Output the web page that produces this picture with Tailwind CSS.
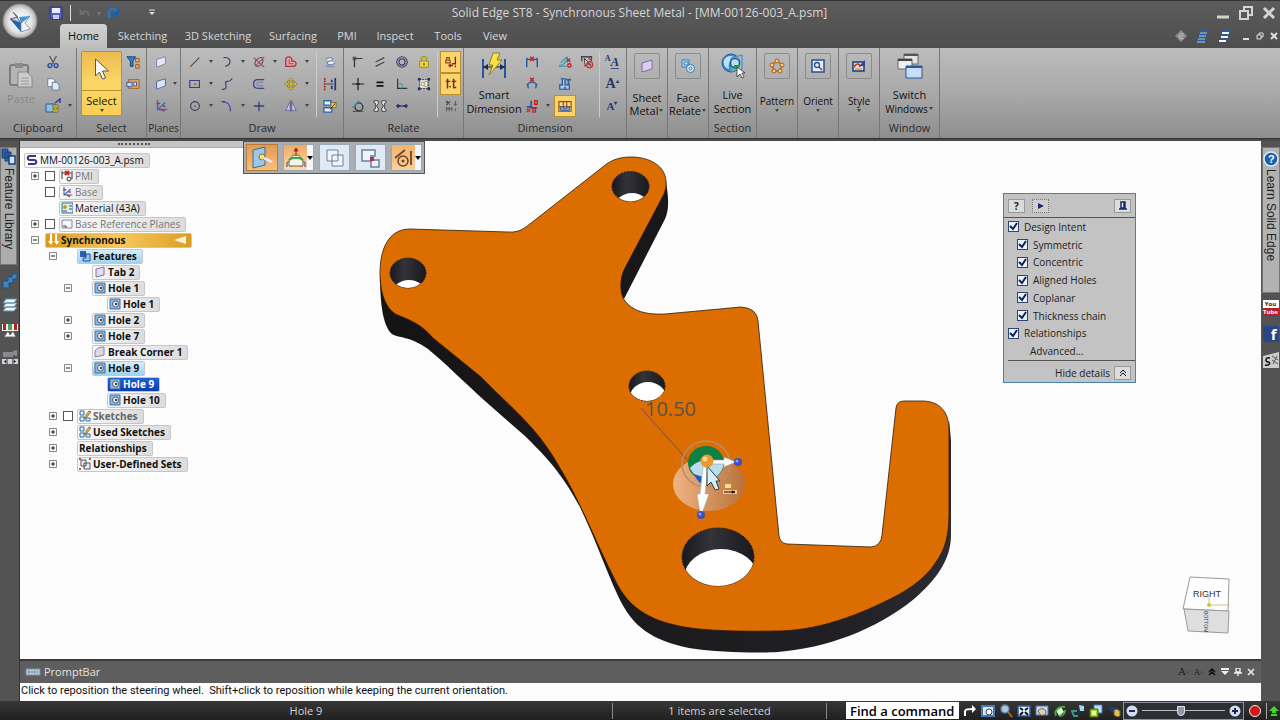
<!DOCTYPE html>
<html lang="en">
<head>
<meta charset="utf-8">
<meta name="viewport" content="width=device-width, initial-scale=1">
<title>Solid Edge ST8 - Synchronous Sheet Metal</title>
<script src="https://cdn.jsdelivr.net/npm/@tailwindcss/browser@4"></script>
</head>
<body class="h-screen flex flex-col overflow-hidden bg-[#505050] text-[11px] leading-4 text-[#222] font-['Open_Sans','Noto_Sans',sans-serif]">

<!-- icon sprite -->
<svg class="absolute size-0">
  <defs>
    <radialGradient id="gOrb"><stop offset="0" stop-color="#fff"/><stop offset=".7" stop-color="#e4e4e4"/><stop offset="1" stop-color="#aaa"/></radialGradient>
  </defs>
  <symbol id="arrow" viewBox="0 0 6 4"><path d="M1 0h4L3 3z" fill="#444"/></symbol>
  <symbol id="save" viewBox="0 0 16 16"><path d="M2 2h12v12H3l-1-1z" fill="#5560b8" stroke="#2c3480"/><path d="M4 3h8v5H4z" fill="#e8ecff"/><path d="M5 10h6v4H5z" fill="#c4c9ee"/></symbol>
  <symbol id="undo" viewBox="0 0 16 16"><path d="M13 12c1-6-5-8-8-4M4 4v5h5" fill="none" stroke="#6f6f6f" stroke-width="2"/></symbol>
  <symbol id="redo" viewBox="0 0 16 16"><path d="M3 13C0 5 6 1 11 6" fill="none" stroke="#2478c0" stroke-width="3"/><path d="M14 2v9H6z" fill="#1d62a8"/><path d="M5 9l4 4" stroke="#1d62a8" stroke-width="3"/></symbol>
  <symbol id="paste" viewBox="0 0 26 28"><rect x="2" y="4" width="18" height="20" rx="2" fill="#b4b4b4" stroke="#7c7c7c" stroke-width="2"/><path d="M7 2h8v5H7z" fill="#8c8c8c"/><path d="M10 11h9l5 5v10H10z" fill="#cbcbcb" stroke="#888"/><path d="M13 17h8M13 20h8M13 23h8" stroke="#999"/></symbol>
  <symbol id="cut" viewBox="0 0 16 16"><path d="M4 1l5 9M12 1L7 10" stroke="#55606e" stroke-width="1.5"/><circle cx="4.500" cy="12" r="2.200" fill="none" stroke="#2a49a8" stroke-width="1.600"/><circle cx="11.500" cy="12" r="2.200" fill="none" stroke="#2a49a8" stroke-width="1.600"/></symbol>
  <symbol id="copy" viewBox="0 0 16 16"><path d="M2 2h6l2 2v7H2z" fill="#f4f7fb" stroke="#68788c"/><path d="M7 6h5l3 3v6H7z" fill="#dfe9f4" stroke="#5d7088"/></symbol>
  <symbol id="format" viewBox="0 0 16 16"><path d="M1 6h9v8H1z" fill="#8ec0e8" stroke="#2b5794"/><path d="M10 5l5-4v4" fill="none" stroke="#2b3f8c" stroke-width="1.500"/><path d="M8 7h5v7H8z" fill="#e6d54c" stroke="#74741e"/><circle cx="10.500" cy="10.500" r="1.500" fill="none" stroke="#56611a"/></symbol>
  <symbol id="cursor" viewBox="0 0 16 24"><path d="M2 1v17l4-4 3 7 3-1-3-7h6z" fill="#fdfdfd" stroke="#555"/></symbol>
  <symbol id="filter" viewBox="0 0 16 16"><path d="M1 2h10L8 7v6H5V7z" fill="#2f7fc8" stroke="#153f72"/><path d="M11 4h4v4h-4z" fill="#e8b45a" stroke="#9b4d16"/><path d="M11 11h4v4h-4z" fill="#e8b45a" stroke="#9b4d16"/></symbol>
  <symbol id="selbox" viewBox="0 0 16 16"><path d="M3 3h12v10H3z" fill="#e6a661" stroke="#a65a1a"/><path d="M1 6h6v5H1z" fill="#c3daf5" stroke="#294f94"/><path d="M9 6h3v4H9z" fill="#fff" stroke="#294f94"/></symbol>
  <symbol id="plane" viewBox="0 0 16 16"><path d="M3 5l10-3v8L3 14z" fill="#e3e8f4" stroke="#7a82a0"/></symbol>
  <symbol id="plane2" viewBox="0 0 16 16"><path d="M3 5l10-3v8L3 14z" fill="#d7e6f8" stroke="#4a5c86"/><path d="M2 15l11-4" stroke="#83a9de"/></symbol>
  <symbol id="axes" viewBox="0 0 16 16"><path d="M4 1v11h11M4 12l9-8" fill="none" stroke="#4267b0" stroke-width="1.500"/><path d="M3 5h4M8 12l4 2M10 8h3" stroke="#a33c5c" stroke-width="2"/></symbol>
  <symbol id="line" viewBox="0 0 16 16"><path d="M3 13L13 3" stroke="#4b4b4b" stroke-width="1.300"/><circle cx="3" cy="13" r="1" fill="#b36b29"/></symbol>
  <symbol id="rect" viewBox="0 0 16 16"><path d="M2 4h11v8H2z" fill="none" stroke="#38407c" stroke-width="1.300"/><path d="M7 7h2v2H7z" fill="#a65a1a"/></symbol>
  <symbol id="circle" viewBox="0 0 16 16"><circle cx="8" cy="8" r="5" fill="none" stroke="#38406c" stroke-width="1.300"/><path d="M7 7h2v2H7z" fill="#a65a1a"/></symbol>
  <symbol id="arc" viewBox="0 0 16 16"><path d="M4 3c9-1 10 8 2 10" fill="none" stroke="#3a4070" stroke-width="1.300"/></symbol>
  <symbol id="curve" viewBox="0 0 16 16"><path d="M2 14c10 1 1-9 6-9s3-1 6-3" fill="none" stroke="#3a4070" stroke-width="1.300"/></symbol>
  <symbol id="fillet" viewBox="0 0 16 16"><path d="M2 3c7 0 10 3 10 11" fill="none" stroke="#4848b8" stroke-width="1.600"/><path d="M2 3h4" stroke="#444"/></symbol>
  <symbol id="trim" viewBox="0 0 16 16"><path d="M5 13C0 8 8 2 11 3s2 10-6 10" fill="none" stroke="#51567c" stroke-width="1.300"/><path d="M2 3l12 11M14 2L4 13" stroke="#b54452" stroke-width="1.200"/></symbol>
  <symbol id="offset" viewBox="0 0 16 16"><path d="M14 3H7C0 3 0 13 7 13h7" fill="none" stroke="#3e4684" stroke-width="1.500"/><path d="M13 6H8c-3 0-3 4 0 4h5" fill="none" stroke="#858bb4" stroke-width="1.500"/></symbol>
  <symbol id="extend" viewBox="0 0 16 16"><path d="M8 3v11M2 8h12" stroke="#38407c" stroke-width="1.500"/></symbol>
  <symbol id="region" viewBox="0 0 16 16"><path d="M2 13V5c0-4 8-4 7 2 6-1 6 6 2 6z" fill="#dca8a8" stroke="#b6303c" stroke-width="1.500"/><path d="M6 5v5h5" stroke="#b6303c" fill="none"/></symbol>
  <symbol id="move" viewBox="0 0 16 16"><path d="M8 1l3 3H9v3h3V5l3 3-3 3V9H9v3h2l-3 3-3-3h2V9H4v2L1 8l3-3v2h3V4H5z" fill="#ecc728" stroke="#75631a" stroke-width=".7"/></symbol>
  <symbol id="mirror" viewBox="0 0 16 16"><path d="M7 3v10H2zM9 3v10h5z" fill="#c2cdea" stroke="#5964a0"/><path d="M8 1v14" stroke="#954454"/></symbol>
  <symbol id="smooth" viewBox="0 0 16 16"><path d="M3 5c3-3 8-2 8 0s-6 1-6 4 5 3 9 0" fill="#e9edf8" stroke="#707caa" stroke-width="1.200"/><path d="M3 13h10" stroke="#8b94bd" stroke-width="2"/></symbol>
  <symbol id="dims" viewBox="0 0 16 16"><path d="M2 1v14" stroke="#b22" stroke-width="2" stroke-dasharray="2 1"/><path d="M14 1v14M10 3v3M10 10v4" stroke="#243a78" stroke-width="2"/><path d="M4 8h8" stroke="#333"/></symbol>
  <symbol id="construct" viewBox="0 0 16 16"><path d="M1 2h8v5H1zM1 10h9v5H1z" fill="#e9f1fb" stroke="#2a66b0" stroke-width="1.500"/><path d="M9 4h6v6H9z" fill="#f0c84d" stroke="#7d652a"/><path d="M8 12l6-7" stroke="#333"/></symbol>
  <symbol id="connect" viewBox="0 0 16 16"><path d="M4 14V4h9" fill="none" stroke="#333" stroke-width="1.400"/><path d="M2 2h4v4H2z" fill="#456"/></symbol>
  <symbol id="parallel" viewBox="0 0 16 16"><path d="M3 8l10-5M3 13l10-5" stroke="#444" stroke-width="1.300"/></symbol>
  <symbol id="concentric" viewBox="0 0 16 16"><circle cx="8" cy="8" r="6" fill="none" stroke="#39406c" stroke-width="1.300"/><circle cx="8" cy="8" r="3.500" fill="none" stroke="#39406c" stroke-width="1.300"/></symbol>
  <symbol id="lock" viewBox="0 0 16 16"><path d="M5 7V4c0-3 6-3 6 0v3" fill="none" stroke="#b39b1a" stroke-width="1.600"/><path d="M3 7h10v7H3z" fill="#f0d83a" stroke="#96801a"/><path d="M8 9v3" stroke="#5f5010" stroke-width="1.500"/></symbol>
  <symbol id="horiz" viewBox="0 0 16 16"><path d="M8 1v14M1 8h14" stroke="#222" stroke-width="1.400"/><path d="M6 7h4v2H6z" fill="#222"/></symbol>
  <symbol id="equal" viewBox="0 0 16 16"><path d="M4 6h8M4 10h8" stroke="#111" stroke-width="2"/></symbol>
  <symbol id="perp" viewBox="0 0 16 16"><path d="M3 2v11h11" fill="none" stroke="#333" stroke-width="1.400"/><path d="M3 8h5v5" fill="#8cc4d8" stroke="#38859e"/></symbol>
  <symbol id="rigid" viewBox="0 0 16 16"><path d="M3 3h10v10H3z" fill="#e9eef8" stroke="#222" stroke-dasharray="2 1"/><path d="M5 6h3v4H5zM9 5h3v6H9z" fill="#fff" stroke="#b58e3a"/><path d="M1 1h3v3H1zM12 1h3v3h-3zM1 12h3v3H1zM12 12h3v3h-3z" fill="#1f2f5e"/></symbol>
  <symbol id="tangent" viewBox="0 0 16 16"><circle cx="9" cy="9" r="4.500" fill="none" stroke="#333" stroke-width="1.500"/><path d="M2 10l7-8" stroke="#2692ae" stroke-width="1.500"/><path d="M2 14h12" stroke="#333"/></symbol>
  <symbol id="symm" viewBox="0 0 16 16"><path d="M1 2h5v3L4 8l2 3v3H1v-2l2-1V5L1 4zM15 2h-5v3l2 3-2 3v3h5v-2l-2-1V5l2-1z" fill="#eee" stroke="#333"/></symbol>
  <symbol id="collinear" viewBox="0 0 16 16"><path d="M1 8h14" stroke="#27306c" stroke-width="1.400"/><path d="M3 6l3 2-3 2zM13 6l-3 2 3 2z" fill="#27306c" stroke="#27306c"/></symbol>
  <symbol id="maintain" viewBox="0 0 16 16"><path d="M3 6V3h3v3M2 6h5v3H2z" fill="none" stroke="#8b4a20" stroke-width="1.300"/><path d="M13 2v8H9M5 12h5M7 10v4M13 12v2" stroke="#7c2323" stroke-width="1.500" fill="none"/></symbol>
  <symbol id="handles" viewBox="0 0 16 16"><path d="M4 2v11M2 5h5M11 2v11M9 5h5M6 11h2M12 12h2" stroke="#7c2323" stroke-width="1.700"/></symbol>
  <symbol id="inter" viewBox="0 0 16 16"><path d="M2 4h5M4 2v5M2 2l5 5M7 2L2 7M13 2v6M11 6h4M3 9v5M6 9v5M9 9v5M3 11h6M13 11v3" stroke="#555" stroke-width="1.100"/></symbol>
  <symbol id="smart" viewBox="0 0 28 28"><path d="M3 7v19M25 7v19" stroke="#2b529e" stroke-width="2"/><path d="M3 15h22" stroke="#222"/><path d="M3 15l5-3v6zM25 15l-5-3v6z" fill="#1b2c5e"/><path d="M13 1h7l-3 7h5L9 23l4-10H9z" fill="#fbe243" stroke="#93821e"/></symbol>
  <symbol id="dist" viewBox="0 0 16 16"><path d="M2 3v11M14 3v11M2 5h12" stroke="#2b529e" stroke-width="1.600"/><path d="M6 2l4 5M10 2L6 7" stroke="#c22" stroke-width="1.800"/></symbol>
  <symbol id="angle" viewBox="0 0 16 16"><path d="M4 13c-3-7 3-7 4-7s7 0 4 7M2 8l2 3M14 8l-2 3" fill="none" stroke="#2b629e" stroke-width="1.600"/><path d="M6 1l4 4M10 1L6 5" stroke="#c22" stroke-width="1.800"/></symbol>
  <symbol id="coord" viewBox="0 0 16 16"><path d="M7 2v8h7M2 9h6" fill="none" stroke="#2b529e" stroke-width="1.800"/><path d="M2 11l4 4M6 11l-4 4" stroke="#c22" stroke-width="1.500"/><path d="M11 2h3v4h-3zM9 11h3v4H9z" fill="none" stroke="#c22" stroke-width="1.500"/></symbol>
  <symbol id="symdia" viewBox="0 0 16 16"><path d="M1 12c4 0 9-3 10-10M1 13h9M3 9l7-7" fill="none" stroke="#4f9bb0" stroke-width="1.500"/><circle cx="13" cy="12" r="2" fill="none" stroke="#c22" stroke-width="1.500"/><path d="M10 4l4 4M14 4l-4 4" stroke="#c22" stroke-width="1.500"/></symbol>
  <symbol id="attach" viewBox="0 0 16 16"><path d="M3 2h5v7h5v5H2V9h3V2" fill="#9fc9ee" stroke="#2b529e" stroke-width="1.300"/><path d="M9 3h6M12 3v6M8 11v3" stroke="#2b629e" stroke-width="1.800"/></symbol>
  <symbol id="lockdim" viewBox="0 0 16 16"><path d="M1 14V3h14v11zM6 3v6h4V3M1 9h14" fill="#f8dfa0" stroke="#8e4b18" stroke-width="1.300"/><path d="M3 9v4h10V9h-3v2H6V9z" fill="#7fb3dc" stroke="#2b529e"/></symbol>
  <symbol id="auto" viewBox="0 0 16 16"><path d="M1 2h13M2 1v6M13 1v6" stroke="#445" stroke-width="1.500"/><path d="M5 4l1 9 2-3 4 1z" fill="#eee" stroke="#222"/><circle cx="11" cy="11" r="3.500" fill="none" stroke="#c33" stroke-width="1.300"/><path d="M9 2l3 4M9 9l4 4" stroke="#c33" stroke-width="1.400"/></symbol>
  <symbol id="globe" viewBox="0 0 24 26"><circle cx="10" cy="10" r="9" fill="#3b8ac6" stroke="#1d5c98"/><path d="M3 7c3-5 9-5 12-1-6-1-8 4-7 10C4 15 2 11 3 7z" fill="#b8e2f4"/><path d="M10 5l11-3v14l-11 3z" fill="#85c0e8" fill-opacity=".6" stroke="#4a87b8"/><circle cx="14" cy="10" r="4.500" fill="#c0dcf0" stroke="#1d5c98" stroke-width="1.500"/><path d="M13 12h5v4h-5z" fill="#2f9440"/><path d="M16 14v10l3-3 2 4 2-1-2-4h3z" fill="#fff" stroke="#333" stroke-width=".8"/></symbol>
  <symbol id="sheet" viewBox="0 0 16 16"><path d="M3 5l10-3v9L3 14z" fill="#d9cdf0" stroke="#7a6ca0"/></symbol>
  <symbol id="facerel" viewBox="0 0 16 16"><path d="M2 2h7v7H2z" fill="#cfe6f6" stroke="#2c7aaa"/><path d="M4 4h4v3H4z" fill="none" stroke="#2c7aaa"/><circle cx="10.500" cy="10.500" r="4" fill="#d8edfa" stroke="#2c7aaa"/><circle cx="10.500" cy="10.500" r="1.500" fill="none" stroke="#2c7aaa"/></symbol>
  <symbol id="pattern" viewBox="0 0 16 16"><path d="M8 3l5 4-2 6H5L3 7z" fill="none" stroke="#b46c1c" stroke-width="1.500"/><g fill="#f4cf8c" stroke="#a85c14"><circle cx="8" cy="3" r="2"/><circle cx="13" cy="7" r="2"/><circle cx="11" cy="13" r="2"/><circle cx="5" cy="13" r="2"/><circle cx="3" cy="7" r="2"/></g></symbol>
  <symbol id="orient" viewBox="0 0 16 16"><path d="M2 2h12v12H2z" fill="#e2eef9" stroke="#28508c" stroke-width="1.500"/><circle cx="7" cy="7" r="2.500" fill="none" stroke="#28508c" stroke-width="1.300"/><path d="M9 9l3 3" stroke="#a03a20" stroke-width="1.600"/></symbol>
  <symbol id="style" viewBox="0 0 16 16"><path d="M2 4h11v9H2z" fill="#cbdaf4" stroke="#28386c" stroke-width="1.500"/><path d="M3 9c3-5 6-3 6 0" fill="none" stroke="#c23a20" stroke-width="1.600"/><path d="M8 8l6-6v6z" fill="#2848a8"/><path d="M4 11h7" stroke="#d8a428" stroke-width="1.500"/></symbol>
  <symbol id="switch" viewBox="0 0 26 26"><path d="M7 1h14v10H7z" fill="#e4e4e4" stroke="#666"/><path d="M7 2h14" stroke="#555" stroke-width="2"/><path d="M1 6h14v10H1z" fill="#eee" stroke="#666"/><path d="M1 7h14" stroke="#444" stroke-width="2"/><path d="M9 13h16v12H9z" fill="#c7def6" stroke="#28569c"/><path d="M9 14h16" stroke="#2858a8" stroke-width="2"/></symbol>
  <symbol id="hole" viewBox="0 0 12 12"><path d="M1 1h10v10H1z" fill="#8bb7e2" stroke="#3d6ea8"/><circle cx="6.500" cy="6" r="3" fill="#e8e4d8" stroke="#3a4a6a" stroke-width=".8"/><path d="M6 5h2v2H6z" fill="#444"/></symbol>
  <symbol id="tab" viewBox="0 0 12 12"><path d="M2 3l8-2v8l-8 2z" fill="#e4dcf2" stroke="#7b7396"/></symbol>
  <symbol id="corner" viewBox="0 0 12 12"><path d="M1 11V6c0-3 4-5 9-5v8z" fill="#ddd8ee" stroke="#8480a0"/></symbol>
  <symbol id="features" viewBox="0 0 12 12"><path d="M1 1h6v6H1z" fill="#2d5fae"/><path d="M5 4h6v7H4V8h3V4" fill="#9cc7ee" stroke="#1d4a94"/></symbol>
  <symbol id="sketch" viewBox="0 0 12 12"><path d="M1 1h4v4H1zM1 7h4v4H1zM7 8h4v3H7z" fill="#e4f0fa" stroke="#2c6ca8"/><path d="M5 8l5-7 2 1-5 6z" fill="#e8b93c" stroke="#6b4c14" stroke-width=".7"/></symbol>
  <symbol id="sets" viewBox="0 0 12 12"><path d="M2 2h5v6H2zM5 5h6v6H5z" fill="#eef" stroke="#555"/><path d="M0 0h2v2H0zM10 0h2v2h-2zM0 10h2v2H0z" fill="#b4602c"/></symbol>
  <symbol id="plus" viewBox="0 0 8 8"><path d="M.5.5h7v7h-7z" fill="#fafafa" stroke="#8a8a8a"/><path d="M2 4h4M4 2v4" stroke="#222"/></symbol>
  <symbol id="minus" viewBox="0 0 8 8"><path d="M.5.5h7v7h-7z" fill="#fafafa" stroke="#8a8a8a"/><path d="M2 4h4" stroke="#222"/></symbol>
  <symbol id="check" viewBox="0 0 11 11"><path d="M2 5l3 3 4-6" fill="none" stroke="#102050" stroke-width="2"/></symbol>
</svg>

<!-- title bar and tabs -->
<header class="relative h-12 shrink-0 bg-linear-to-b from-[#5c5c5e] to-[#4e4e4e] border-t border-[#333] text-[#d6d6d6]">
  <button aria-label="Application menu" class="absolute left-[2px] top-[2px] z-10">
    <svg class="size-9" viewBox="0 0 36 36"><circle cx="18" cy="18" r="17" fill="url(#gOrb)" stroke="#888"/><path d="M8 16l11 4v9z" fill="#1b62b4"/><path d="M19 20l9-7-5 7 5 6-9 3z" fill="#eef3f8" stroke="#7a8592" stroke-width=".8"/><path d="M11 9l8 11-11-4 8-2z" fill="#c6d4e0" stroke="#667"/><path d="M17 14l11-1-9 7z" fill="#3b97de"/></svg>
  </button>
  <div class="h-[23px] flex items-center">
    <div class="w-[160px] pl-12 flex items-center gap-[6px] shrink-0">
      <button aria-label="Save"><svg class="size-4"><use href="#save"/></svg></button>
      <span class="w-px h-4 bg-[#ddd]"></span>
      <button aria-label="Undo"><svg class="size-[14px]"><use href="#undo"/></svg></button>
      <span class="text-[#777] text-[8px]">▾</span>
      <button aria-label="Redo"><svg class="size-[14px]"><use href="#redo"/></svg></button>
      <button aria-label="Customize" class="ml-auto pr-1"><svg class="w-2 h-[7px]" viewBox="0 0 8 7"><path d="M1 1h6" stroke="#ddd"/><path d="M1 3h6L4 6z" fill="#ddd"/></svg></button>
    </div>
    <h1 class="flex-1 text-center text-[12px] whitespace-nowrap">Solid Edge ST8 - Synchronous Sheet Metal - [MM-00126-003_A.psm]</h1>
    <div class="w-[161px] flex justify-end items-center gap-2 pr-1 shrink-0">
      <button aria-label="Minimize"><svg class="size-[14px]" viewBox="0 0 14 14"><path d="M1 11h12" stroke="#d4d4d4" stroke-width="3"/></svg></button>
      <button aria-label="Restore"><svg class="size-4" viewBox="0 0 16 16"><path d="M2 6h8v8H2zM6 6V2h8v8h-4" fill="none" stroke="#d4d4d4" stroke-width="2"/></svg></button>
      <button aria-label="Close"><svg class="size-[14px]" viewBox="0 0 14 14"><path d="M2 2l10 10M12 2L2 12" stroke="#d4d4d4" stroke-width="3"/></svg></button>
    </div>
  </div>
  <nav class="h-6 flex items-end pl-[60px]">
    <a href="#" class="w-[47px] h-6 pt-1 text-center rounded-t-sm bg-linear-to-b from-[#d2d2d2] to-[#bdbdbd] text-[#111]">Home</a>
    <a href="#" class="w-[71px] h-6 pt-1 text-center">Sketching</a>
    <a href="#" class="w-[80px] h-6 pt-1 text-center">3D Sketching</a>
    <a href="#" class="w-[70px] h-6 pt-1 text-center">Surfacing</a>
    <a href="#" class="w-[38px] h-6 pt-1 text-center">PMI</a>
    <a href="#" class="w-[58px] h-6 pt-1 text-center">Inspect</a>
    <a href="#" class="w-[48px] h-6 pt-1 text-center">Tools</a>
    <a href="#" class="w-[46px] h-6 pt-1 text-center">View</a>
    <div class="ml-auto h-6 flex items-center gap-[6px] pr-[2px]">
      <button aria-label="Help"><svg class="size-[14px]" viewBox="0 0 14 14"><path d="M7 1l6 6-6 6-6-6z" fill="#8a8a8a"/><path d="M5 8c0-4 5-4 4-2s-4 1-3 3 3 0 4 0" fill="none" stroke="#ccc"/></svg></button>
      <button aria-label="Cascade" class="ml-[2px]"><svg class="size-[14px]" viewBox="0 0 14 14"><path d="M5 2h7M4 5h7M3 8h7M2 11h7" stroke="#245ca8" stroke-width="2"/><path d="M4 4h7M3 7h7M2 10h7M1 13h8" stroke="#a8cdf2"/></svg></button>
      <button aria-label="Tile" class="ml-[2px]"><svg class="size-[14px]" viewBox="0 0 14 14"><path d="M5 2h7M4 5h7" stroke="#245ca8" stroke-width="2"/><path d="M4 4h7M3 8h7M1 12h7" stroke="#f4f8ff" stroke-width="2"/><path d="M3 10h7" stroke="#245ca8"/></svg></button>
      <button aria-label="Minimize document" class="ml-[5px]"><svg class="w-[7px] h-2" viewBox="0 0 7 8"><path d="M0 7h6" stroke="#ddd" stroke-width="2"/></svg></button>
      <button aria-label="Restore document"><svg class="size-2" viewBox="0 0 8 8"><path d="M1 3h4v4H1zM3 3V1h4v4H5" fill="none" stroke="#ddd"/></svg></button>
      <button aria-label="Close document"><svg class="size-2" viewBox="0 0 8 8"><path d="M1 1l6 6M7 1L1 7" stroke="#ddd" stroke-width="2"/></svg></button>
    </div>
  </nav>
</header>

<!-- ribbon -->
<div class="h-[90px] shrink-0 flex bg-linear-to-b from-[#bcbcbc] via-[#a9a9a9] to-[#8e8e8e] [&>section]:shrink-0 [&>section]:flex [&>section]:flex-col [&>section]:justify-between [&>section]:pt-[3px] [&>section]:pb-[2px] [&>section]:border-r [&>section]:border-[#777] [&_h2]:text-center [&_h2]:text-[#2b2b2b] [&_button]:flex [&_button]:items-center [&_button]:justify-center">
  <section class="w-[77px]">
    <div class="flex">
      <button class="w-[42px] flex-col text-[#888]"><svg class="w-[26px] h-7"><use href="#paste"/></svg><span class="mt-[2px]">Paste</span></button>
      <div class="grid grid-cols-[22px_12px] auto-rows-[22px]">
        <button aria-label="Cut"><svg class="size-[14px]"><use href="#cut"/></svg></button><span></span>
        <button aria-label="Copy"><svg class="size-[14px]"><use href="#copy"/></svg></button><span></span>
        <button aria-label="Format painter"><svg class="size-4"><use href="#format"/></svg></button><button aria-label="More"><svg class="w-[6px] h-1"><use href="#arrow"/></svg></button>
      </div>
    </div>
    <h2>Clipboard</h2>
  </section>
  <section class="w-[70px]">
    <div class="flex pl-1">
      <button class="w-[41px] h-[65px] flex-col bg-linear-to-b from-[#ecbb4c] via-[#fbd768] to-[#fbcf52] border border-[#b98f35] rounded-xs text-[#111]">
        <svg class="w-[17px] h-6 my-1"><use href="#cursor"/></svg>
        <span class="w-full border-t border-[#b98f35] mt-1 pt-[2px]">Select</span>
        <svg class="w-[6px] h-1"><use href="#arrow"/></svg>
      </button>
      <div class="grid grid-cols-[22px] auto-rows-[22px]">
        <button aria-label="Selection filter"><svg class="size-[14px]"><use href="#filter"/></svg></button>
        <button aria-label="Selection manager"><svg class="size-[14px]"><use href="#selbox"/></svg></button>
      </div>
    </div>
    <h2>Select</h2>
  </section>
  <section class="w-[34px]">
    <div class="grid grid-cols-[20px_8px] auto-rows-[22px] pl-1">
      <button aria-label="Coincident plane"><svg class="size-[14px]"><use href="#plane"/></svg></button><span></span>
      <button aria-label="More planes"><svg class="size-[14px]"><use href="#plane2"/></svg></button><button aria-label="More"><svg class="w-[6px] h-1"><use href="#arrow"/></svg></button>
      <button aria-label="Coordinate system"><svg class="size-[14px]"><use href="#axes"/></svg></button>
    </div>
    <h2 class="text-[10px]">Planes</h2>
  </section>
  <section class="w-[163px]">
    <div class="flex">
      <div class="w-[136px] grid grid-cols-[22px_10px_22px_10px_22px_10px_22px_10px] auto-rows-[22px] pl-[3px] border-r border-[#ccc] [&_svg]:size-[14px] [&_svg.arr]:w-[6px] [&_svg.arr]:h-1">
        <button aria-label="Line"><svg><use href="#line"/></svg></button><svg class="arr m-auto"><use href="#arrow"/></svg>
        <button aria-label="Arc"><svg><use href="#arc"/></svg></button><svg class="arr m-auto"><use href="#arrow"/></svg>
        <button aria-label="Trim"><svg><use href="#trim"/></svg></button><svg class="arr m-auto"><use href="#arrow"/></svg>
        <button aria-label="Region"><svg><use href="#region"/></svg></button><svg class="arr m-auto"><use href="#arrow"/></svg>
        <button aria-label="Rectangle"><svg><use href="#rect"/></svg></button><svg class="arr m-auto"><use href="#arrow"/></svg>
        <button aria-label="Curve"><svg><use href="#curve"/></svg></button><span></span>
        <button aria-label="Offset"><svg><use href="#offset"/></svg></button><span></span>
        <button aria-label="Move"><svg><use href="#move"/></svg></button><svg class="arr m-auto"><use href="#arrow"/></svg>
        <button aria-label="Circle"><svg><use href="#circle"/></svg></button><svg class="arr m-auto"><use href="#arrow"/></svg>
        <button aria-label="Fillet"><svg><use href="#fillet"/></svg></button><svg class="arr m-auto"><use href="#arrow"/></svg>
        <button aria-label="Extend"><svg><use href="#extend"/></svg></button><span></span>
        <button aria-label="Mirror"><svg><use href="#mirror"/></svg></button><svg class="arr m-auto"><use href="#arrow"/></svg>
      </div>
      <div class="grid grid-cols-[26px] auto-rows-[22px] [&_svg]:size-[14px]">
        <button aria-label="Smooth"><svg><use href="#smooth"/></svg></button>
        <button aria-label="Project"><svg><use href="#dims"/></svg></button>
        <button aria-label="Construction"><svg><use href="#construct"/></svg></button>
      </div>
    </div>
    <h2>Draw</h2>
  </section>
  <section class="w-[120px]">
    <div class="flex">
      <div class="w-[94px] grid grid-cols-[22px_22px_22px_22px] auto-rows-[22px] pl-[3px] border-r border-[#ccc] [&_svg]:size-[14px]">
        <button aria-label="Connect"><svg><use href="#connect"/></svg></button>
        <button aria-label="Parallel"><svg><use href="#parallel"/></svg></button>
        <button aria-label="Concentric"><svg><use href="#concentric"/></svg></button>
        <button aria-label="Lock"><svg><use href="#lock"/></svg></button>
        <button aria-label="Horizontal/Vertical"><svg><use href="#horiz"/></svg></button>
        <button aria-label="Equal"><svg><use href="#equal"/></svg></button>
        <button aria-label="Perpendicular"><svg><use href="#perp"/></svg></button>
        <button aria-label="Rigid set"><svg><use href="#rigid"/></svg></button>
        <button aria-label="Tangent"><svg><use href="#tangent"/></svg></button>
        <button aria-label="Symmetric"><svg><use href="#symm"/></svg></button>
        <button aria-label="Collinear"><svg><use href="#collinear"/></svg></button>
      </div>
      <div class="grid grid-cols-[21px] auto-rows-[22px] pl-[2px] [&_svg]:size-[14px]">
        <button aria-label="Maintain relationships" class="bg-[#fbd56c] border border-[#b98f35]"><svg><use href="#maintain"/></svg></button>
        <button aria-label="Relationship handles" class="bg-[#fbd56c] border border-[#b98f35]"><svg><use href="#handles"/></svg></button>
        <button aria-label="Relationship assistant"><svg><use href="#inter"/></svg></button>
      </div>
    </div>
    <h2>Relate</h2>
  </section>
  <section class="w-[163px]">
    <div class="flex">
      <button class="w-[58px] pl-[2px] flex-col text-[#111] leading-[14px]"><svg class="size-7 mb-2"><use href="#smart"/></svg>Smart<br>Dimension</button>
      <div class="w-[78px] grid grid-cols-[20px_12px_22px_22px] auto-rows-[22px] border-r border-[#ccc] [&_svg]:size-[14px] [&_svg.arr]:w-[6px] [&_svg.arr]:h-1">
        <button aria-label="Distance between"><svg><use href="#dist"/></svg></button><span></span>
        <button aria-label="Symmetric diameter"><svg><use href="#symdia"/></svg></button>
        <button aria-label="Automatic dimension"><svg><use href="#auto"/></svg></button>
        <button aria-label="Angle between"><svg><use href="#angle"/></svg></button><span></span>
        <button aria-label="Attach dimension"><svg><use href="#attach"/></svg></button><span></span>
        <button aria-label="Coordinate dimension"><svg><use href="#coord"/></svg></button><svg class="arr m-auto"><use href="#arrow"/></svg>
        <button aria-label="Dimension axis" class="bg-[#fbd56c] border border-[#b98f35]"><svg><use href="#lockdim"/></svg></button>
      </div>
      <div class="grid grid-cols-[24px] auto-rows-[22px] font-['Liberation_Serif',serif] font-bold text-[#20386c]">
        <button aria-label="Text style" class="text-[13px]"><span class="text-[8px] self-start">A</span><i class="border-b border-[#3a50a0] leading-3">A</i></button>
        <button aria-label="Increase font" class="text-[14px]">A<span class="text-[6px] self-start">▴</span></button>
        <button aria-label="Decrease font" class="text-[11px]">A<span class="text-[6px] self-start">▾</span></button>
      </div>
    </div>
    <h2>Dimension</h2>
  </section>
  <section class="w-[41px]">
    <button class="flex-col leading-[13px] text-[#111]"><span class="size-[26px] mt-[2px] mb-3 rounded-xs border border-[#8b8b8b] flex items-center justify-center"><svg class="size-4"><use href="#sheet"/></svg></span>Sheet<span class="flex items-center">Metal<svg class="w-[6px] h-1"><use href="#arrow"/></svg></span></button>
  </section>
  <section class="w-[41px]">
    <button class="flex-col leading-[13px] text-[#111]"><span class="size-[26px] mt-[2px] mb-3 rounded-xs border border-[#8b8b8b] flex items-center justify-center"><svg class="size-4"><use href="#facerel"/></svg></span>Face<span class="flex items-center">Relate<svg class="w-[6px] h-1"><use href="#arrow"/></svg></span></button>
  </section>
  <section class="w-[48px]">
    <button class="flex-col leading-[14px] text-[#111]"><svg class="w-6 h-[26px] mt-[2px] mb-[9px]"><use href="#globe"/></svg>Live<br>Section</button>
    <h2>Section</h2>
  </section>
  <section class="w-[41px]">
    <button class="flex-col text-[#111]"><span class="size-[26px] mt-[2px] mb-[14px] rounded-xs border border-[#8b8b8b] flex items-center justify-center"><svg class="size-4"><use href="#pattern"/></svg></span><span class="text-[10px]">Pattern</span><svg class="w-[6px] h-1"><use href="#arrow"/></svg></button>
  </section>
  <section class="w-[41px]">
    <button class="flex-col text-[#111]"><span class="size-[26px] mt-[2px] mb-[14px] rounded-xs border border-[#8b8b8b] flex items-center justify-center"><svg class="size-4"><use href="#orient"/></svg></span><span class="text-[10px]">Orient</span><svg class="w-[6px] h-1"><use href="#arrow"/></svg></button>
  </section>
  <section class="w-[41px]">
    <button class="flex-col text-[#111]"><span class="size-[26px] mt-[2px] mb-[14px] rounded-xs border border-[#8b8b8b] flex items-center justify-center"><svg class="size-4"><use href="#style"/></svg></span><span class="text-[10px]">Style</span><svg class="w-[6px] h-1"><use href="#arrow"/></svg></button>
  </section>
  <section class="w-[60px]">
    <button class="flex-col leading-[14px] text-[#111]"><svg class="size-[26px] mt-[2px] mb-[9px]"><use href="#switch"/></svg>Switch<span class="flex items-center text-[10px]">Windows<svg class="w-[6px] h-1"><use href="#arrow"/></svg></span></button>
    <h2>Window</h2>
  </section>
</div>
<div class="h-[3px] shrink-0 bg-[#4a4a4a] border-t border-[#333]"></div>

<!-- work area -->
<div class="flex-1 min-h-0 flex">
  <aside class="w-5 shrink-0 pt-[6px] flex flex-col items-center bg-[#535353] border-r border-[#333]">
    <button class="w-[17px] h-[118px] self-start bg-[#adadad] border border-[#777] flex flex-col items-center text-[12px] text-[#222] font-['Liberation_Sans',sans-serif]">
      <svg class="w-[15px] h-[18px] shrink-0" viewBox="0 0 15 18"><path d="M1 1h6v9H1zM4 4h6v9H4z" fill="#2b63ae" stroke="#174078"/><path d="M8 8h6v8H8z" fill="#cfe4f8" stroke="#174078" stroke-width="1.500"/></svg>
      <span class="[writing-mode:vertical-rl] whitespace-nowrap mt-[2px]">Feature Library</span>
    </button>
    <button aria-label="Family of parts" class="mt-2"><svg class="size-4" viewBox="0 0 16 16"><path d="M1 8h5V4h4V1h5v5h-4v4H7v5H1z" fill="#3d86c4" stroke="#1d507e"/></svg></button>
    <button aria-label="Layers" class="mt-2"><svg class="size-4" viewBox="0 0 16 16"><path d="M4 2h11l-3 4H1zM4 6h11l-3 4H1zM4 10h11l-3 4H1z" fill="#eef6fb" stroke="#5e90ac"/></svg></button>
    <button aria-label="Sensors" class="mt-[10px]"><svg class="size-4" viewBox="0 0 16 16"><path d="M0 1h16v7H0z" fill="#eee"/><path d="M1 1h3v6H1zM12 1h3v6h-3z" fill="#b82020"/><path d="M6 1h4v6H6z" fill="#48a858"/><path d="M2 14l4-6 2 4 3-4 3 6z" fill="#fff" stroke="#666"/></svg></button>
    <button aria-label="Playback" class="mt-[10px]"><svg class="size-4" viewBox="0 0 16 16"><path d="M1 3h10v5H1zM11 2l4-1v6l-4-1z" fill="#8a8a8a"/><path d="M0 10h16v5H0z" fill="#ccd3de"/><path d="M5 10v5M11 10v5" stroke="#333"/><path d="M4 11v3l-2-1.500zM12 11v3l2-1.500z" fill="#111"/></svg></button>
  </aside>

  <main class="flex-1 min-w-0 flex flex-col">
    <div class="relative flex-1 min-h-0 bg-[#fcfcfc] overflow-hidden">
      <!-- model view -->
      <svg class="absolute inset-0 size-full" viewBox="20 141 1241 517" preserveAspectRatio="xMidYMin meet">
        <defs>
          <clipPath id="h1"><ellipse cx="630.500" cy="186.500" rx="18.500" ry="15"/></clipPath>
          <clipPath id="h2"><ellipse cx="408" cy="273" rx="18" ry="15"/></clipPath>
          <clipPath id="h3"><ellipse cx="647" cy="386" rx="18" ry="15"/></clipPath>
          <clipPath id="h4"><ellipse cx="718" cy="557" rx="36" ry="29"/></clipPath>
          <linearGradient id="gHole"><stop offset="0" stop-color="#19181c"/><stop offset=".4" stop-color="#34333a"/><stop offset="1" stop-color="#19181c"/></linearGradient>
          <linearGradient id="gWheel" x1="0" y1="0" x2="1" y2="0"><stop offset="0" stop-color="#f0b483"/><stop offset="1" stop-color="#b9713a"/></linearGradient>
          <linearGradient id="gSide"><stop offset="0" stop-color="#151314"/><stop offset=".8" stop-color="#201f23"/><stop offset="1" stop-color="#2e2c31"/></linearGradient>
        </defs>
        <path d="M380 273C380 300 382 325 392 334C398 338 410 336 428 349C445 363 464 382 485 401L525 436C556 466 566 482 580 507C597 543 606 570 618 596C633 628 652 640 689 648C722 653 760 653 778 652C826 648 876 630 914 599C936 580 951 560 951 535V440L949 420L935 540L860 590L700 560L600 400Z" fill="url(#gSide)"/>
        <path d="M666 182C669 200 669 210 665 219L624 299L615 285L650 190Z" fill="#19171a"/>
        <path d="M410 229L508 232Q518 233 526 227L604 166C612 159 622 157 631 157C650 157 665 166 666 181Q667 187 664 194L624 270C620 279 620 290 623 298C630 309 641 315 665 314L741 307Q757 308 758 321L779 536Q780 543 787 544L871 547Q881 546 882 535L896 408Q897 401 904 401H922C940 401 949 412 949 430V515C949 535 945 550 936 562C925 580 904 593 882 603C842 622 808 631 776 631Q730 632 699 629C652 624 629 609 615 580C596 543 580 500 557 463C535 425 510 407 481 377L433 338C422 325 412 321 400 316C387 312 380 295 380 273C380 250 388 229 410 229Z" fill="#dc6d00" stroke="#2d1a0a" stroke-width=".8"/>
        <g stroke="#222" stroke-width="1" stroke-dasharray="2 1">
          <ellipse cx="630.500" cy="186.500" rx="18.500" ry="15" fill="url(#gHole)"/>
          <ellipse cx="408" cy="273" rx="18" ry="15" fill="url(#gHole)"/>
          <ellipse cx="647" cy="386" rx="18" ry="15" fill="url(#gHole)"/>
          <ellipse cx="718" cy="557" rx="36" ry="29" fill="url(#gHole)"/>
        </g>
        <ellipse cx="632" cy="208" rx="18" ry="15" fill="#fff" clip-path="url(#h1)"/>
        <ellipse cx="409" cy="295" rx="18" ry="15" fill="#fff" clip-path="url(#h2)"/>
        <ellipse cx="648" cy="397" rx="18" ry="15" fill="#fff" clip-path="url(#h3)"/>
        <ellipse cx="721" cy="578" rx="37" ry="29" fill="#fff" clip-path="url(#h4)"/>

        <!-- steering wheel -->
        <path d="M641 408L690 463" stroke="#a0563c" stroke-width="1.200"/>
        <text x="645" y="416" font-size="20" fill="#5b5245" font-family="Liberation Sans Narrow, Open Sans, sans-serif">10.50</text>
        <ellipse cx="709" cy="484" rx="36" ry="27" fill="url(#gWheel)"/>
        <ellipse cx="706" cy="464" rx="24" ry="23" fill="none" stroke="#b98c6c" stroke-width="1.500"/>
        <ellipse cx="706" cy="463" rx="18" ry="17" fill="#0e8044"/>
        <path d="M690 468c8-10 24-10 34-4-2 10-10 16-18 16-8-1-13-6-16-12z" fill="#bcdcee"/>
        <path d="M694 474l9 3v7c-4-1-7-5-9-10z" fill="#1d5cc0"/>
        <path d="M712 460h12v-3l12 5-12 5v-3h-12z" fill="#fff" stroke="#9a9a9a" stroke-width=".6"/>
        <path d="M703 467l-3 27h-3l3 19h2l7-19h-4l3-27z" fill="#fff" stroke="#aaa" stroke-width=".6"/>
        <path d="M707 466v20l4-4 4 8 4-1-3-8h4z" fill="#d9edf4" stroke="#23434c"/>
        <circle cx="707" cy="461" r="6.500" fill="#e69a2e"/><circle cx="705" cy="459" r="2.500" fill="#ffd58a"/>
        <circle cx="738" cy="462" r="4" fill="#3d4fc4"/><circle cx="737" cy="461" r="1.500" fill="#8d9cf0"/>
        <circle cx="701" cy="515" r="4" fill="#3d4fc4"/><circle cx="700" cy="514" r="1.500" fill="#8d9cf0"/>
        <path d="M725 484h6v4h-6z" fill="#fbdc90"/>
        <path d="M723 490h14v4h-14z" fill="#f6c48e"/><path d="M724 492h10M732 491l3 1-3 1z" stroke="#111" fill="#111"/>

        <!-- view cube -->
        <g stroke="#9a9a9a" stroke-width="1">
          <path d="M1190 577l39 2-1 32-45-2z" fill="#fdfdfd"/>
          <path d="M1184 609l45 2-1 22-40-2z" fill="#dedede"/>
        </g>
        <path d="M1209 596v9M1209 605h21" stroke="#c9c68c"/><circle cx="1209" cy="605" r="2" fill="#c8c43a"/>
        <text x="1193" y="597" font-size="9" fill="#333" font-family="Liberation Sans, sans-serif">RIGHT</text>
        <text transform="translate(1204 611) rotate(90)" font-size="5" fill="#444" font-family="Liberation Sans, sans-serif">BOTTOM</text>
      </svg>

      <!-- pathfinder tree -->
      <div class="relative w-[228px]">
        <div class="h-[7px] bg-[#c4c4c4] border-b border-[#aaa] flex justify-center items-center"><span class="w-8 border-t-2 border-dotted border-[#555]"></span></div>
        <ul class="pt-1 text-[10px] whitespace-nowrap [&>li]:h-4 [&>li]:flex [&>li]:items-center [&_i]:w-[14px] [&_i]:shrink-0 [&_i_svg]:size-2 [&_i_input]:block [&_i_input]:size-[10px] [&_i_input]:appearance-none [&_i_input]:border [&_i_input]:border-[#555] [&_i_input]:bg-white [&_b]:h-[15px] [&_b]:flex [&_b]:items-center [&_b]:gap-[2px] [&_b]:pl-px [&_b]:pr-[5px] [&_b]:border [&_b]:border-[#c6c6c6] [&_b]:rounded-xs [&_b_svg]:size-3 text-[#111]">
          <li class="pl-1"><b class="bg-linear-to-r from-[#fafafa] to-[#dcdcdc] font-normal"><svg viewBox="0 0 12 12"><path d="M10 2H4C1 2 1 6 4 6h4c3 0 3 4 0 4H2" fill="none" stroke="#3e3680" stroke-width="2"/></svg>MM-00126-003_A.psm</b></li>
          <li class="pl-[11px]"><i><svg><use href="#plus"/></svg></i><i><input type="checkbox" aria-label="PMI"></i><b class="bg-linear-to-r from-[#fafafa] to-[#dcdcdc] font-normal text-[#777]"><svg viewBox="0 0 12 12"><path d="M1 1v8M11 1v8M1 3h9" stroke="#334"/><path d="M4 1l4 4M8 1L4 5" stroke="#c22" stroke-width="2"/><circle cx="8" cy="9" r="2" fill="none" stroke="#334"/></svg>PMI</b></li>
          <li class="pl-[11px]"><i></i><i><input type="checkbox" aria-label="Base"></i><b class="bg-linear-to-r from-[#fafafa] to-[#dcdcdc] font-normal text-[#777]"><svg viewBox="0 0 16 16"><use href="#axes"/></svg>Base</b></li>
          <li class="pl-[11px]"><i></i><i></i><b class="bg-linear-to-r from-[#fafafa] to-[#dcdcdc] font-normal"><svg viewBox="0 0 12 12"><path d="M1 1h11v10H1z" fill="#dfeef2" stroke="#2c6c84"/><circle cx="4" cy="5" r="2" fill="#c49a2c"/><path d="M2 9h4M8 4h3M8 7h3" stroke="#2c4c94"/></svg>Material (43A)</b></li>
          <li class="pl-[11px]"><i><svg><use href="#plus"/></svg></i><i><input type="checkbox" aria-label="Base Reference Planes"></i><b class="bg-linear-to-r from-[#fafafa] to-[#dcdcdc] font-normal text-[#777]"><svg viewBox="0 0 12 12"><path d="M1 2h10v8H1z" fill="#f4f4fc" stroke="#8484a4"/><path d="M2 8h3v2" stroke="#445" fill="none"/></svg>Base Reference Planes</b></li>
          <li class="pl-[11px]"><i><svg><use href="#minus"/></svg></i><b class="w-[147px] bg-linear-to-r from-[#d99a1c] via-[#f7c95c] to-[#dd9d20]"><svg viewBox="0 0 12 12"><path d="M4 0v8M9 0v8" stroke="#fff" stroke-width="2"/><path d="M1 7h5l-2 4zM7 7h5l-2 4z" fill="#fff"/></svg>Synchronous<svg class="ml-auto" viewBox="0 0 12 12"><path d="M0 6l12-4v8z" fill="#fff4d8"/></svg></b></li>
          <li class="pl-[29px]"><i><svg><use href="#minus"/></svg></i><i></i><b class="bg-linear-to-b from-[#d4effb] to-[#9fd3ee]"><svg><use href="#features"/></svg>Features</b></li>
          <li class="pl-[44px]"><i></i><i></i><b class="bg-linear-to-r from-[#fafafa] to-[#dcdcdc]"><svg><use href="#tab"/></svg>Tab 2</b></li>
          <li class="pl-[44px]"><i><svg><use href="#minus"/></svg></i><i></i><b class="bg-linear-to-r from-[#fafafa] to-[#dcdcdc]"><svg><use href="#hole"/></svg>Hole 1</b></li>
          <li class="pl-[59px]"><i></i><i></i><b class="bg-linear-to-r from-[#fafafa] to-[#dcdcdc]"><svg><use href="#hole"/></svg>Hole 1</b></li>
          <li class="pl-[44px]"><i><svg><use href="#plus"/></svg></i><i></i><b class="bg-linear-to-r from-[#fafafa] to-[#dcdcdc]"><svg><use href="#hole"/></svg>Hole 2</b></li>
          <li class="pl-[44px]"><i><svg><use href="#plus"/></svg></i><i></i><b class="bg-linear-to-r from-[#fafafa] to-[#dcdcdc]"><svg><use href="#hole"/></svg>Hole 7</b></li>
          <li class="pl-[44px]"><i></i><i></i><b class="bg-linear-to-r from-[#fafafa] to-[#dcdcdc]"><svg><use href="#corner"/></svg>Break Corner 1</b></li>
          <li class="pl-[44px]"><i><svg><use href="#minus"/></svg></i><i></i><b class="bg-linear-to-b from-[#d4effb] to-[#9fd3ee]"><svg><use href="#hole"/></svg>Hole 9</b></li>
          <li class="pl-[59px]"><i></i><i></i><b class="bg-linear-to-b from-[#1e62d8] to-[#0a3cae] text-white"><svg><use href="#hole"/></svg>Hole 9</b></li>
          <li class="pl-[59px]"><i></i><i></i><b class="bg-linear-to-r from-[#fafafa] to-[#dcdcdc]"><svg><use href="#hole"/></svg>Hole 10</b></li>
          <li class="pl-[29px]"><i><svg><use href="#plus"/></svg></i><i><input type="checkbox" aria-label="Sketches"></i><b class="bg-linear-to-r from-[#fafafa] to-[#dcdcdc] text-[#666]"><svg><use href="#sketch"/></svg>Sketches</b></li>
          <li class="pl-[29px]"><i><svg><use href="#plus"/></svg></i><i></i><b class="bg-linear-to-r from-[#fafafa] to-[#dcdcdc]"><svg><use href="#sketch"/></svg>Used Sketches</b></li>
          <li class="pl-[29px]"><i><svg><use href="#plus"/></svg></i><i></i><b class="bg-linear-to-r from-[#fafafa] to-[#dcdcdc]">Relationships</b></li>
          <li class="pl-[29px]"><i><svg><use href="#plus"/></svg></i><i></i><b class="bg-linear-to-r from-[#fafafa] to-[#dcdcdc]"><svg><use href="#sets"/></svg>User-Defined Sets</b></li>
        </ul>
      </div>

      <!-- floating command bar -->
      <div class="absolute left-[223px] top-0 flex gap-[5px] p-[2px] bg-[#a9adb4] border border-[#555]">
        <button aria-label="Relations" class="w-8 h-[27px] flex items-center justify-center bg-linear-to-b from-[#e39a52] to-[#f7be7c] border border-[#b57a3c]"><svg class="size-6" viewBox="0 0 24 24"><path d="M3 4l12-3v18L3 22z" fill="#9cc8e8" stroke="#3b6c98"/><circle cx="12" cy="11" r="3" fill="#f6e08c" stroke="#8c7420"/><path d="M14 12l8 4" stroke="#e4e8ee" stroke-width="3"/></svg></button>
        <button aria-label="Keep tangent" class="w-[31px] h-[27px] flex items-center bg-[#f3f6fa] border border-[#9aa]"><span class="w-[23px] h-full flex items-center justify-center bg-linear-to-b from-[#f0a860] to-[#f9dcae]"><svg class="size-[22px]" viewBox="0 0 22 22"><path d="M2 20v-4c0-2 4-2 4 1v3M20 20v-4c0-2-4-2-4 1v3" fill="#dce6f4" stroke="#2b3f74"/><path d="M4 14L8 8h6l4 6v5H4z" fill="#f2f6e8" stroke="#8c5c2c"/><path d="M4 13c3-3 11-3 14 0" fill="none" stroke="#30a040" stroke-width="2"/><path d="M11 9V3M9 4l2-3 2 3z" stroke="#b02020" fill="#b02020"/></svg></span><svg class="w-[6px] h-1" viewBox="0 0 6 4"><path d="M0 0h6L3 4z"/></svg></button>
        <button aria-label="Copy" class="w-[31px] h-[27px] flex items-center justify-center bg-[#dfeaf4] border border-[#9ab]"><svg class="size-5" viewBox="0 0 20 20"><path d="M2 2h11v11H2zM7 7h11v11H7z" fill="#eef4fa" stroke="#6d8094"/></svg></button>
        <button aria-label="Detach" class="w-[31px] h-[27px] flex items-center justify-center bg-[#dfeaf4] border border-[#9ab]"><svg class="size-5" viewBox="0 0 20 20"><path d="M1 2h13v6h-4v5H1zM10 12h8v7h-8z" fill="#eef4fa" stroke="#6d8094" stroke-width="1.500"/><path d="M9 9h4v4H9z" fill="#c02850"/></svg></button>
        <button aria-label="Extend select" class="w-[31px] h-[27px] flex items-center bg-[#f3f6fa] border border-[#9aa]"><span class="w-[23px] h-full flex items-center justify-center bg-linear-to-b from-[#f3b26c] to-[#f9d09c]"><svg class="size-[20px]" viewBox="0 0 20 20"><circle cx="9" cy="13" r="5" fill="none" stroke="#6d4428" stroke-width="1.500"/><circle cx="9" cy="13" r="1.500" fill="#6d4428"/><path d="M1 10l10-8M17 3v14" stroke="#6d4428" stroke-width="1.800"/></svg></span><svg class="w-[6px] h-1" viewBox="0 0 6 4"><path d="M0 0h6L3 4z"/></svg></button>
      </div>

      <!-- design intent panel -->
      <div class="absolute right-[125px] top-[52px] w-[133px] bg-[#c3c3c3] border border-[#4584b0] text-[10px] [&_input]:appearance-none [&_input]:size-[11px] [&_input]:border [&_input]:border-[#2c4478] [&_input]:bg-[#e9f2fb] [&_label]:flex-1 [&_label]:flex [&_label]:items-center [&_label]:gap-[5px] [&_label_span]:relative [&_label_span]:flex [&_label_svg]:absolute [&_label_svg]:inset-0 [&_label_svg]:size-[11px]">
        <div class="h-6 px-1 flex items-center border-b border-[#555]">
          <button class="w-[17px] h-[14px] bg-[#dcdcde] border border-[#999] leading-3 font-bold">?</button>
          <button aria-label="Run" class="ml-[7px] w-[17px] h-[14px] bg-[#cfcfd2] border border-dotted border-[#777] flex items-center justify-center"><svg class="size-2" viewBox="0 0 8 8"><path d="M1 1l6 3-6 3z" fill="#162a6c"/></svg></button>
          <button aria-label="Pin" class="ml-auto w-[17px] h-[14px] bg-[#dcdcde] border border-[#999] flex items-center justify-center"><svg class="size-[10px]" viewBox="0 0 10 10"><path d="M3 1h4v6H3zM1 8h8M6 1v6" fill="#dfe8f8" stroke="#162a6c" stroke-width="1.500"/></svg></button>
        </div>
        <div class="h-[142px] flex flex-col">
          <label class="pl-1"><span><input type="checkbox" checked><svg><use href="#check"/></svg></span>Design Intent</label>
          <label class="pl-[13px]"><span><input type="checkbox" checked><svg><use href="#check"/></svg></span>Symmetric</label>
          <label class="pl-[13px]"><span><input type="checkbox" checked><svg><use href="#check"/></svg></span>Concentric</label>
          <label class="pl-[13px]"><span><input type="checkbox" checked><svg><use href="#check"/></svg></span>Aligned Holes</label>
          <label class="pl-[13px]"><span><input type="checkbox" checked><svg><use href="#check"/></svg></span>Coplanar</label>
          <label class="pl-[13px]"><span><input type="checkbox" checked><svg><use href="#check"/></svg></span>Thickness chain</label>
          <label class="pl-1"><span><input type="checkbox" checked><svg><use href="#check"/></svg></span>Relationships</label>
          <button class="flex-1 pl-[26px] text-left">Advanced...</button>
        </div>
        <div class="ml-1 h-[22px] pr-1 pt-[3px] border-t border-[#555] flex items-center justify-end gap-1">Hide details
          <button aria-label="Hide details" class="w-[17px] h-[14px] bg-[#dcdcde] border border-[#999] flex items-center justify-center"><svg class="size-2" viewBox="0 0 8 8"><path d="M1 4l3-3 3 3M1 7l3-3 3 3" fill="none" stroke="#111"/></svg></button>
        </div>
      </div>
    </div>

    <!-- prompt bar -->
    <div class="h-6 shrink-0 pl-[5px] pr-[6px] flex items-center gap-[3px] bg-[#5e5e5e] border-t-2 border-[#3a3a3a] text-[#e2e2e2]">
      <svg class="w-4 h-[10px]" viewBox="0 0 16 10"><path d="M1 2h14v6H1z" fill="#b9c6d2" stroke="#7896ae"/><path d="M3 5h10" stroke="#567" stroke-dasharray="2 1"/></svg>
      <span>PromptBar</span>
      <div class="ml-auto flex items-center gap-[5px] text-[#1c1c1c] font-['Liberation_Serif',serif]">
        <button aria-label="Larger text" class="text-[11px]">A<span class="text-[6px]">^</span></button>
        <button aria-label="Smaller text" class="text-[9px]">A<span class="text-[6px]">^</span></button>
        <button aria-label="Collapse"><svg class="size-2" viewBox="0 0 8 8"><path d="M1 4l3-3 3 3M1 7l3-3 3 3" fill="none" stroke="#111" stroke-width="1.500"/></svg></button>
        <button aria-label="Menu"><svg class="size-2" viewBox="0 0 8 8"><path d="M0 1h8" stroke="#eee" stroke-width="2"/><path d="M0 3h8L4 7z" fill="#eee"/></svg></button>
        <button aria-label="Auto hide"><svg class="size-2" viewBox="0 0 8 8"><path d="M2 0h4v4H2zM0 5h8M4 5v3" fill="none" stroke="#eee" stroke-width="1.300"/></svg></button>
        <button aria-label="Close"><svg class="size-2" viewBox="0 0 8 8"><path d="M1 1l6 6M7 1L1 7" stroke="#eee" stroke-width="1.600"/></svg></button>
      </div>
    </div>
    <p class="h-[18px] shrink-0 pl-px bg-[#fcfcfc] leading-4 text-[#111] font-['Roboto',sans-serif] whitespace-pre">Click to reposition the steering wheel.  Shift+click to reposition while keeping the current orientation.</p>
  </main>

  <aside class="w-[19px] shrink-0 pt-[6px] flex flex-col items-center bg-[#535353]">
    <button class="w-[18px] h-[146px] bg-[#b2b2b2] border border-[#777] flex flex-col items-center text-[12px] text-[#222] font-['Liberation_Sans',sans-serif]">
      <svg class="size-4 mt-[3px] shrink-0" viewBox="0 0 16 16"><circle cx="8" cy="8" r="7" fill="#1c5fa8" stroke="#d8ecf8" stroke-width="1.500"/><text x="5" y="12" font-size="11" font-weight="bold" fill="#fff">?</text></svg>
      <span class="[writing-mode:vertical-rl] whitespace-nowrap mt-[2px]">Learn Solid Edge</span>
    </button>
    <a href="#" class="mt-[7px] w-4 h-4 flex flex-col bg-white text-[6px] leading-2 font-bold text-center text-[#222]">You<span class="bg-[#b3202c] text-white leading-2">Tube</span></a>
    <a href="#" class="mt-[10px] w-4 h-4 bg-[#2b4680] text-white font-bold text-[15px] leading-4 text-right pr-[2px]">f</a>
    <a href="#" aria-label="Community" class="mt-[10px]"><svg class="size-4" viewBox="0 0 16 16"><path d="M0 4l16-4v16H0z" fill="#ccc"/><path d="M7 6c-5-1-5 4-2 4s2 4-3 3" fill="none" stroke="#111" stroke-width="1.500"/><path d="M9 4l6 4M9 8l6 4M10 12l4-8" stroke="#555"/></svg></a>
  </aside>
</div>

<!-- status bar -->
<footer class="h-[19px] shrink-0 flex items-center bg-linear-to-b from-[#373737] to-[#202020] text-[#d0d0d0]">
  <div class="flex-1 text-center">Hole 9</div>
  <div class="w-px h-4 bg-[#888]"></div>
  <div class="w-[213px] text-center">1 items are selected</div>
  <div class="w-px h-4 bg-[#888]"></div>
  <input type="text" aria-label="Find a command" value="Find a command" class="ml-[19px] w-[113px] h-[17px] bg-white text-black text-[13px] font-semibold px-1">
  <div class="ml-1 flex items-center gap-[4px] [&_svg]:size-[14px] [&_button]:block">
    <button aria-label="Go"><svg viewBox="0 0 14 14"><path d="M2 12V8c0-3 3-3 8-3" fill="none" stroke="#fff" stroke-width="2"/><path d="M9 1l4 4-4 4z" fill="#fff"/></svg></button>
    <button aria-label="Zoom area"><svg viewBox="0 0 14 14"><path d="M1 2h12v10H1z" fill="#d5e4f2" stroke="#4a78b0" stroke-width="2"/><circle cx="8" cy="8" r="3" fill="#fff" stroke="#345"/></svg></button>
    <button aria-label="Zoom"><svg viewBox="0 0 14 14"><circle cx="6" cy="5" r="4" fill="#a8c8e0" stroke="#5b84a8" stroke-width="1.500"/><path d="M9 8l4 5" stroke="#a86830" stroke-width="2"/></svg></button>
    <button aria-label="Fit"><svg viewBox="0 0 14 14"><path d="M1 2h12v10H1z" fill="#e6eef8" stroke="#2c5a9c" stroke-width="1.500"/><path d="M3 4l3 2M11 4L8 6M3 11l3-3M11 11L8 8" stroke="#112" stroke-width="2"/></svg></button>
    <button aria-label="Pan"><svg viewBox="0 0 14 14"><path d="M1 2h12v9H1z" fill="#cbd4de" stroke="#4a78b0"/><path d="M3 7c3-4 8-2 8 1s-5 6-8-1z" fill="#dcd0b4" stroke="#665"/></svg></button>
    <button aria-label="Rotate"><svg viewBox="0 0 14 14"><path d="M3 6l5-3 3 5-5 4z" fill="#e8f4e0"/><path d="M3 12C1 7 5 2 12 3M6 12c4 0 6-3 6-6" fill="none" stroke="#3fae3c" stroke-width="2"/></svg></button>
    <button aria-label="Look at face"><svg viewBox="0 0 14 14"><path d="M8 1l5 1v5H9z" fill="#9adcf0"/><path d="M6 7H1l2 5h4" fill="none" stroke="#389c88" stroke-width="2"/></svg></button>
    <button aria-label="View orientation"><svg viewBox="0 0 14 14"><path d="M5 1h8v8H5z" fill="#c4e0f4" stroke="#3c80b8"/><path d="M1 5h8v8H1z" fill="#a4d028" stroke="#3c6410"/><path d="M3 7h4v4H3z" fill="#eaf8b4"/></svg></button>
    <button aria-label="View style"><svg viewBox="0 0 14 14"><path d="M1 4l5-2 5 3-5 4z" fill="#1d3c74"/><path d="M7 6l3-1 3 2v5l-3 1-3-2z" fill="#e0c05c" stroke="#6c5820"/></svg></button>
  </div>
  <div class="ml-[2px] w-[121px] h-[18px] px-[2px] flex items-center border border-[#8c93a4] bg-[#2c2f36]">
    <button aria-label="Zoom out"><svg class="size-3" viewBox="0 0 12 12"><circle cx="6" cy="6" r="5.500" fill="#d4dced"/><path d="M3 6h6" stroke="#1c2c54" stroke-width="2"/></svg></button>
    <input type="range" aria-label="Zoom" min="0" max="100" value="46" class="flex-1 min-w-0 mx-1 h-[10px] appearance-none bg-[linear-gradient(#bbb,#bbb)] bg-size-[100%_1px] bg-center bg-no-repeat [&::-webkit-slider-thumb]:appearance-none [&::-webkit-slider-thumb]:w-2 [&::-webkit-slider-thumb]:h-[10px] [&::-webkit-slider-thumb]:bg-[#9098a8] [&::-webkit-slider-thumb]:border [&::-webkit-slider-thumb]:border-[#e0e4ec] [&::-webkit-slider-thumb]:rounded-b-sm">
    <button aria-label="Zoom in"><svg class="size-3" viewBox="0 0 12 12"><circle cx="6" cy="6" r="5.500" fill="#d4dced"/><path d="M3 6h6M6 3v6" stroke="#1c2c54" stroke-width="2"/></svg></button>
  </div>
  <button aria-label="Record" class="ml-1"><svg class="size-[14px]" viewBox="0 0 14 14"><circle cx="7" cy="7" r="5.500" fill="#d01818" stroke="#eee"/></svg></button>
  <span class="ml-1 w-px h-4 bg-[#aaa]"></span>
  <button aria-label="Upload" class="ml-[1px]"><svg class="size-3" viewBox="0 0 12 12"><path d="M6 1l5 5H8v2H4V6H1zM3 9h6v2H3z" fill="#42d42c"/></svg></button>
</footer>
</body>
</html>
